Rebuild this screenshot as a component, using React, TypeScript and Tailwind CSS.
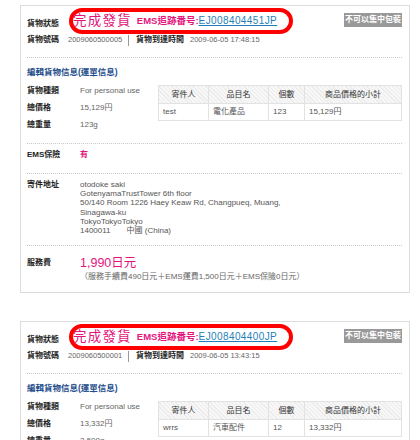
import React from 'react';

type Order = {
  number: string;
  arrived: string;
  tracking: string;
  kind: string;
  total: string;
  weight: string;
  sender: string;
  item: string;
  qty: string;
  subtotal: string;
  insured: string;
  address: string[];
  fee: string;
  feeDetail: string;
};

const orders: Order[] = [
  {
    number: '2009060500005',
    arrived: '2009-06-05 17:48:15',
    tracking: 'EJ008404451JP',
    kind: 'For personal use',
    total: '15,129円',
    weight: '123g',
    sender: 'test',
    item: '電化產品',
    qty: '123',
    subtotal: '15,129円',
    insured: '有',
    address: [
      'otodoke saki',
      'GotenyamaTrustTower 6th floor',
      '50/140 Room 1226 Haey Keaw Rd, Changpueq, Muang,',
      'Sinagawa-ku',
      'TokyoTokyoTokyo',
      '1400011　　中國 (China)',
    ],
    fee: '1,990日元',
    feeDetail: '（服務手續費490日元＋EMS運費1,500日元＋EMS保險0日元）',
  },
  {
    number: '2009060500001',
    arrived: '2009-06-05 13:43:15',
    tracking: 'EJ008404400JP',
    kind: 'For personal use',
    total: '13,332円',
    weight: '2,500g',
    sender: 'wrrs',
    item: '汽車配件',
    qty: '12',
    subtotal: '13,332円',
    insured: '有',
    address: [
      'otodoke saki',
      'GotenyamaTrustTower 6th floor',
      '50/140 Room 1226 Haey Keaw Rd, Changpueq, Muang,',
      'Sinagawa-ku',
      'TokyoTokyoTokyo',
      '1400011　　中國 (China)',
    ],
    fee: '2,890日元',
    feeDetail: '（服務手續費490日元＋EMS運費2,400日元＋EMS保險0日元）',
  },
];

const Dotted = () => <div className="border-t border-dotted border-[#c8c8c8]" />;

const OrderCard = ({ o }: { o: Order }) => (
  <div className="border border-[#dcdcdc] pl-[6px] pr-[7px] pt-[2px] mb-[28px] text-[8px] text-[#222]">
    {/* status row */}
    <div className="flex items-start h-[26px]">
      <div className="w-[42px] pt-[12px] font-bold leading-none">貨物狀態</div>
      <div className="flex items-center h-[26px] border-[4px] border-[#ff0000] rounded-full pr-[12px]">
        <span className="text-[13.5px] leading-none tracking-[1.2px] text-[#e4147c]">完成發貨</span>
        <span className="ml-[5px] text-[9.5px] leading-none font-bold text-[#e4147c]">EMS追跡番号:</span>
        <span className="text-[10px] leading-none text-[#1e7fb8] underline tracking-[0.4px]">{o.tracking}</span>
      </div>
      <div className="ml-auto mt-[5px] bg-[#999] px-[1px] h-[14px] leading-[14px] text-white font-bold">
        不可以集中包裝
      </div>
    </div>

    <div className="flex items-center h-[12px] leading-none">
      <span className="w-[41px] font-bold">貨物號碼</span>
      <span className="w-[60px] text-[7.5px] text-[#666]">{o.number}</span>
      <span className="h-[11px] border-l border-[#999] mr-[7px]" />
      <span className="w-[54px] font-bold">貨物到達時間</span>
      <span className="text-[7.5px] text-[#666]">{o.arrived}</span>
    </div>

    <div className="mt-[11px]">
      <Dotted />
    </div>

    <div className="mt-[9px] h-[10px] leading-[10px] text-[8.5px] font-bold text-[#1f4e8c]">
      編輯貨物信息(運單信息)
    </div>

    {/* details */}
    <div className="flex items-start mt-[8px]">
      <div className="w-[131px] -mt-[3px] flex flex-col">
        {[
          ['貨物種類', o.kind],
          ['總價格', o.total],
          ['總重量', o.weight],
        ].map(([k, v]) => (
          <div key={k} className="flex items-center h-[17px]">
            <span className="w-[53px] font-bold">{k}</span>
            <span className="text-[#666]">{v}</span>
          </div>
        ))}
      </div>
      <table className="flex-1 table-fixed border-collapse border border-[#e2e2e2] text-[8px]">
        <colgroup>
          <col className="w-[50px]" />
          <col className="w-[60px]" />
          <col className="w-[36px]" />
          <col />
        </colgroup>
        <thead>
          <tr className="h-[18px] bg-[repeating-linear-gradient(45deg,#ececec_0,#ececec_1px,#f7f7f7_1px,#f7f7f7_3px)]">
            {['寄件人', '品目名', '個數', '商品價格的小計'].map((h) => (
              <th key={h} className="border border-[#e2e2e2] font-normal text-[#333]">
                {h}
              </th>
            ))}
          </tr>
        </thead>
        <tbody>
          <tr className="h-[17px] text-[#555]">
            <td className="border border-[#e2e2e2] pl-[4px]">{o.sender}</td>
            <td className="border border-[#e2e2e2] pl-[4px]">{o.item}</td>
            <td className="border border-[#e2e2e2] pl-[4px]">{o.qty}</td>
            <td className="border border-[#e2e2e2] pl-[4px]">{o.subtotal}</td>
          </tr>
        </tbody>
      </table>
    </div>

    <div className="mt-[10px]">
      <Dotted />
    </div>

    <div className="flex pt-[6px] pb-[13px] leading-[10px]">
      <span className="w-[53px] font-bold">EMS保險</span>
      <span className="font-bold text-[#e4147c]">{o.insured}</span>
    </div>

    <Dotted />

    <div className="flex pt-[6px] pb-[10px] leading-[9.2px]">
      <span className="w-[53px] font-bold">寄件地址</span>
      <div className="flex flex-col text-[#555]">
        {o.address.map((l, i) => (
          <span key={i} className="whitespace-pre">
            {l}
          </span>
        ))}
      </div>
    </div>

    <Dotted />

    <div className="flex pt-[9px] pb-[10px]">
      <span className="w-[53px] h-[16px] leading-[16px] font-bold">服務費</span>
      <div className="flex flex-col">
        <span className="h-[16px] leading-[16px] text-[12.5px] text-[#e4147c]">{o.fee}</span>
        <span className="mt-[1px] leading-[10px] text-[#666]">{o.feeDetail}</span>
      </div>
    </div>
  </div>
);

export default function App() {
  return (
    <div className="min-h-screen bg-white pt-[5px] pl-[20px] pr-[10px] font-['Liberation_Sans','Noto_Sans_CJK_TC',sans-serif]">
      {orders.map((o) => (
        <OrderCard key={o.number} o={o} />
      ))}
    </div>
  );
}
